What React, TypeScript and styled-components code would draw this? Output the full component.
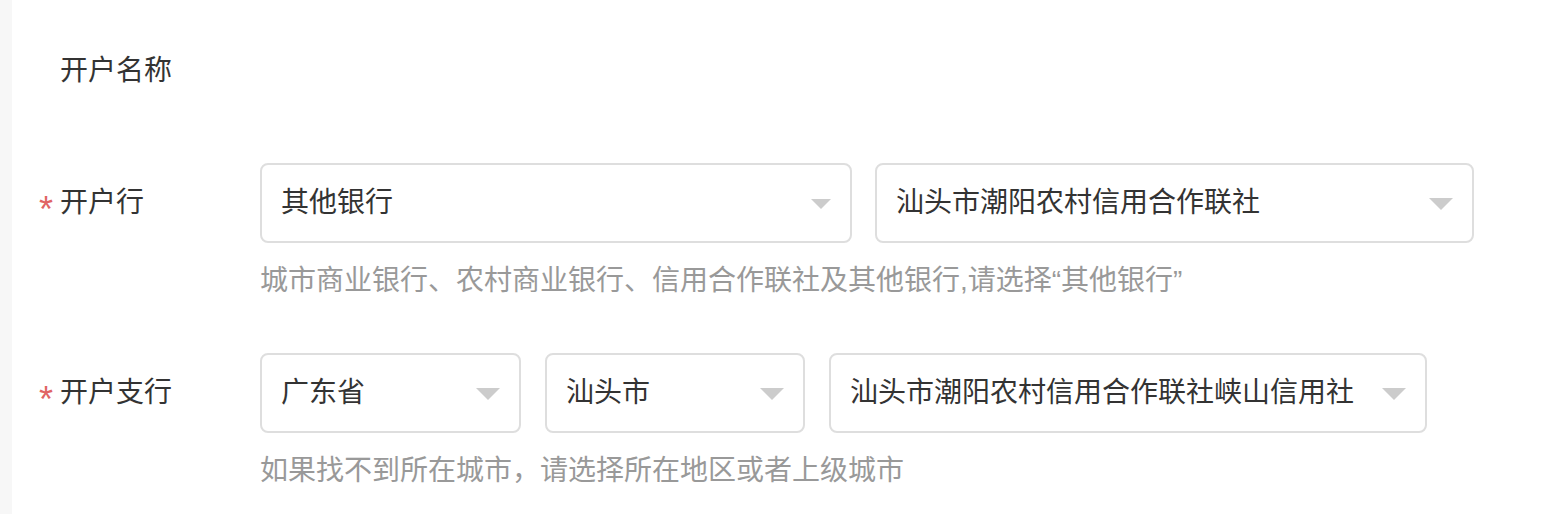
import * as React from 'react'
import styled, { createGlobalStyle } from 'styled-components'

const GlobalStyle = createGlobalStyle`
    html, body {
        margin: 0;
        padding: 0;
        background: #ffffff;
    }
    body {
        font-family: "Liberation Sans", "Noto Sans CJK SC", sans-serif;
        color: #333333;
    }
`

const Page = styled.div`
    display: flex;
    height: 514px;
    overflow: hidden;
`

const SideStrip = styled.div`
    width: 12px;
    flex-shrink: 0;
    background: #f7f7f7;
`

const Form = styled.div`
    flex: 1;
    display: flex;
    flex-direction: column;
    padding: 31px 0 0 28px;
`

const FormItem = styled.div`
    display: flex;
    margin-bottom: 52px;

    &:last-child {
        margin-bottom: 0;
    }
`

const Label = styled.div`
    width: 220px;
    height: 80px;
    flex-shrink: 0;
    display: flex;
    align-items: center;
    font-size: 28px;
    line-height: 40px;
    color: #333333;
`

const Star = styled.span<{ $show: boolean }>`
    width: 21px;
    flex-shrink: 0;
    font-family: "Liberation Sans", sans-serif;
    font-size: 36px;
    line-height: 40px;
    color: #e06464;
    visibility: ${p => (p.$show ? 'visible' : 'hidden')};
    padding-top: 14px;
    margin-left: -1px;
`

const Field = styled.div`
    display: flex;
    flex-direction: column;
`

const SelectRow = styled.div<{ $gap: number }>`
    display: flex;
    gap: ${p => p.$gap}px;
`

const SelectBox = styled.div<{ $width: number }>`
    box-sizing: border-box;
    width: ${p => p.$width}px;
    height: 80px;
    display: flex;
    align-items: center;
    justify-content: space-between;
    padding: 0 19px 0 19px;
    border: 2px solid #dedede;
    border-radius: 8px;
    background: #ffffff;
    font-size: 28px;
    line-height: 40px;
    color: #333333;
    cursor: pointer;
`

const Caret = styled.span<{ $size: number }>`
    width: 0;
    height: 0;
    border-left: ${p => p.$size}px solid transparent;
    border-right: ${p => p.$size}px solid transparent;
    border-top: ${p => p.$size}px solid #cccccc;
    margin-top: 2px;
`

const Hint = styled.div`
    margin-top: 18px;
    font-size: 28px;
    line-height: 40px;
    color: #999999;
`

type SelectProps = { value: string; width: number; caret?: number }

const Select: React.FC<SelectProps> = ({ value, width, caret = 12 }) => (
    <SelectBox $width={width}>
        <span>{value}</span>
        <Caret $size={caret} />
    </SelectBox>
)

export default function App() {
    return (
        <>
            <GlobalStyle />
            <Page>
                <SideStrip />
                <Form>
                    <FormItem>
                        <Label>
                            <Star $show={false}>*</Star>
                            开户名称
                        </Label>
                    </FormItem>

                    <FormItem>
                        <Label>
                            <Star $show>*</Star>
                            开户行
                        </Label>
                        <Field>
                            <SelectRow $gap={23}>
                                <Select value="其他银行" width={592} caret={10} />
                                <Select value="汕头市潮阳农村信用合作联社" width={599} />
                            </SelectRow>
                            <Hint>城市商业银行、农村商业银行、信用合作联社及其他银行,请选择“其他银行”</Hint>
                        </Field>
                    </FormItem>

                    <FormItem>
                        <Label>
                            <Star $show>*</Star>
                            开户支行
                        </Label>
                        <Field>
                            <SelectRow $gap={24}>
                                <Select value="广东省" width={261} />
                                <Select value="汕头市" width={260} />
                                <Select value="汕头市潮阳农村信用合作联社峡山信用社" width={598} />
                            </SelectRow>
                            <Hint>如果找不到所在城市，请选择所在地区或者上级城市</Hint>
                        </Field>
                    </FormItem>
                </Form>
            </Page>
        </>
    )
}
